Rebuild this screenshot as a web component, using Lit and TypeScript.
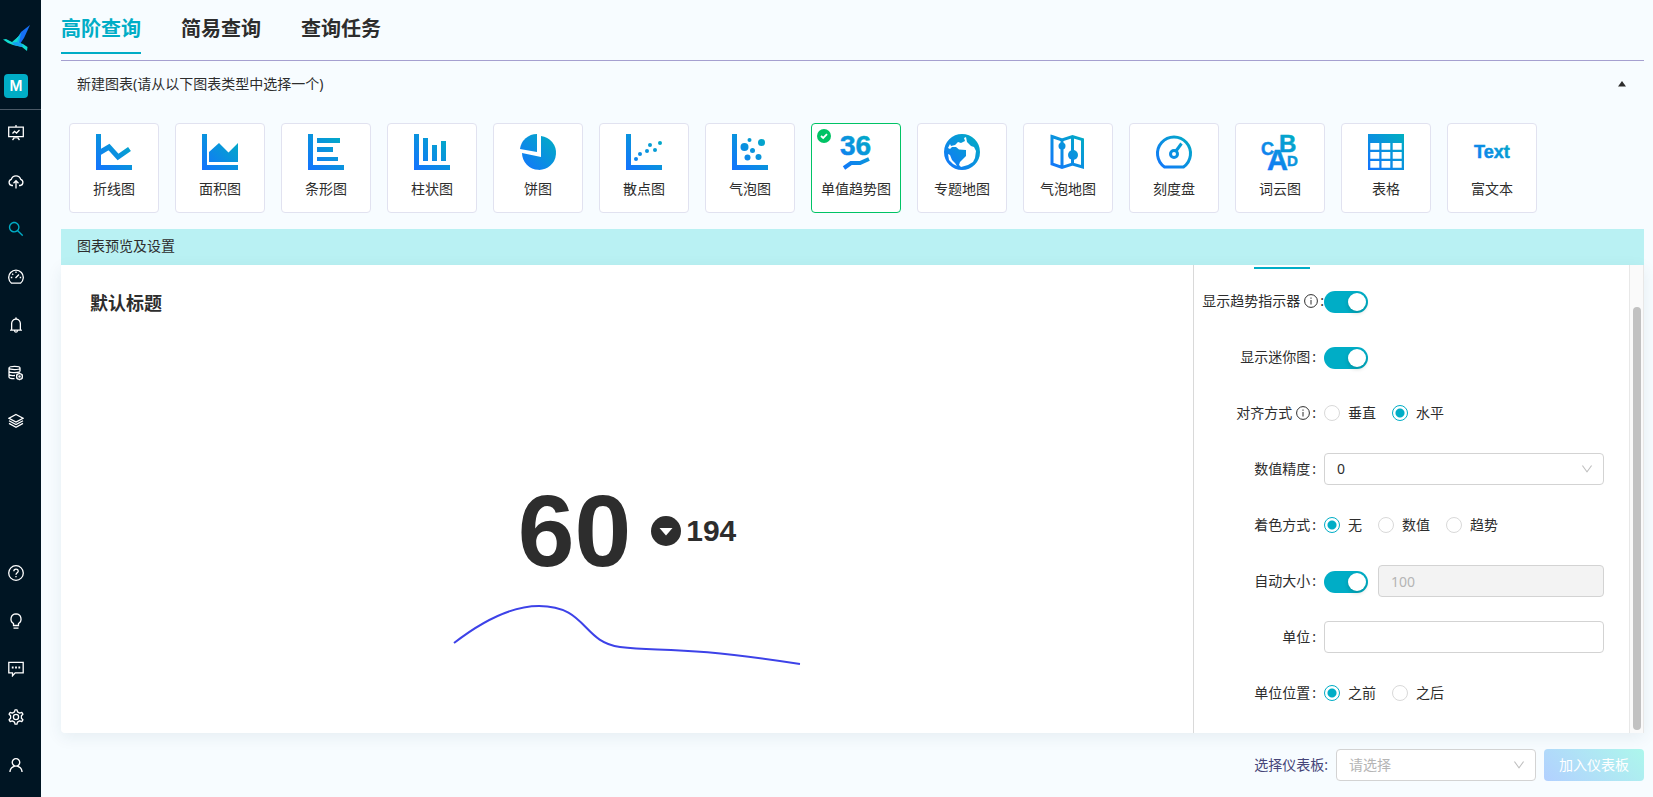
import { LitElement, html, css, svg } from "lit";
import { customElement, state } from "lit/decorators.js";
import { classMap } from "lit/directives/class-map.js";

const axes = svg`<path d="M0 0H5V31H36V36H0Z" />`;

const charts = [
  {
    name: "折线图",
    art: svg`${axes}<path class="line" stroke-width="5" d="M3 19L13 13L22 23L33.500 15" />`,
  },
  { name: "面积图", art: svg`${axes}<path d="M7 28V18L17 9L26.500 18.500L36 9V28Z" />` },
  { name: "条形图", art: svg`${axes}<path d="M9 4H32V9H9ZM9 13H25V18H9ZM9 23H30V27H9Z" />` },
  { name: "柱状图", art: svg`${axes}<path d="M9 4H14V27H9ZM18 11H23V27H18ZM27 7H32V27H27Z" />` },
  {
    name: "饼图",
    art: svg`<path d="M21 2A17 17 0 1 1 2 19L21 23Z" /><path d="M17 0V18L0 15A17 17 0 0 1 17 0Z" />`,
  },
  {
    name: "散点图",
    art: svg`${axes}<circle cx="10" cy="25" r="2" /><circle cx="14" cy="20" r="2" /><circle cx="21" cy="17" r="2" />
      <circle cx="24" cy="11" r="2" /><circle cx="29" cy="16" r="2" /><circle cx="34" cy="9" r="2" />`,
  },
  {
    name: "气泡图",
    art: svg`${axes}<circle cx="12.500" cy="13" r="4" /><circle cx="17.500" cy="6" r="2" /><circle cx="29.500" cy="8.500" r="3.500" />
      <circle cx="20.500" cy="16.500" r="2.500" /><circle cx="15.500" cy="23.500" r="3" /><circle cx="26.500" cy="23" r="3" />`,
  },
  {
    name: "单值趋势图",
    art: svg`<text x="2" y="21" font-size="28">36</text>
      <path class="line" stroke-width="4" d="M6 34L13 29H22L31 25" />`,
  },
  {
    name: "专题地图",
    art: svg`<path fill-rule="evenodd" d="M18 0A18 18 0 1 1 18 36A18 18 0 1 1 18 0ZM6 10L7 12L11 11L14 8L17 9L21 7L20 4L22 3L23 8L27 12L30 13L32 17L31 24L29 28L24 31L17 33L15 31L16 28L20 24L22 22V16L15 15.500L12 13L8 13L6 15L4 14ZM4 20L6 21L8 26L11 29L13 32L9 30L5 26Z" />`,
  },
  {
    name: "气泡地图",
    art: svg`<path class="line" stroke-width="3" d="M2 2.500L12 6L22.500 2.500L32.500 5.500V33L22.500 30L12 33.500L2 30ZM12 6V33M22.500 3V30" />
      <circle cx="12" cy="12" r="3.500" /><circle cx="23" cy="21" r="5" />`,
  },
  {
    name: "刻度盘",
    art: svg`<path class="line" stroke-width="3" stroke-linejoin="round" d="M8.500 33A16.500 16.500 0 1 1 27.500 33Z" />
      <circle class="line" cx="18" cy="20" r="3.500" stroke-width="3" />
      <path class="line" stroke-width="3" d="M20 17L25.500 9.500" />`,
  },
  {
    name: "词云图",
    art: svg`<text x="-1" y="21" font-size="18">C</text><text x="17" y="18" font-size="24">B</text>
      <text x="5" y="36" font-size="29">A</text><text x="25" y="32" font-size="15">D</text>`,
  },
  {
    name: "表格",
    art: svg`<path fill-rule="evenodd" d="M0 0H36V36H0ZM2.300 9V15.700H11.300V9ZM13.500 9V15.700H22.300V9ZM24.700 9V15.700H33.700V9ZM2.300 18V24.700H11.300V18ZM13.500 18V24.700H22.300V18ZM24.700 18V24.700H33.700V18ZM2.300 27V33.700H11.300V27ZM13.500 27V33.700H22.300V27ZM24.700 27V33.700H33.700V27Z" />`,
  },
  { name: "富文本", art: svg`<text x="0" y="24" font-size="18">Text</text>` },
];

/* Sidebar glyphs, 16-unit outlines unless scaled from the 64..960 grid. */
const big = (d: string) =>
  svg`<path class="solid" transform="scale(0.017857) translate(-64 -64)" d="${d}" />`;

const topNav = [
  {
    name: "仪表板",
    art: svg`<path d="M8 0V2M.7 2.200H15.300V11.700H.7ZM8 12V13.500M4.500 15L6.500 12.500M11.500 15L9.500 12.500M4.500 8.500L6.500 6.300L8.500 8L11.500 5" />`,
  },
  {
    name: "数据上传",
    art: svg`<path d="M5 12.500H3.800A3.200 3.200 0 0 1 3.300 6.300A4.900 4.900 0 0 1 12.700 6.300A3.200 3.200 0 0 1 12.200 12.500H11M8 15.500V8M5.500 10.300L8 7.700L10.500 10.300" />`,
  },
  {
    name: "查询",
    art: big(
      "M909.6 854.5L649.9 594.8C690.2 542.7 712 479 712 412c0-80.2-31.300-155.4-87.900-212.100-56.600-56.700-132-87.900-212.100-87.900s-155.500 31.300-212.100 87.900C143.2 256.5 112 331.8 112 412c0 80.100 31.300 155.500 87.900 212.100C256.5 680.8 331.8 712 412 712c67 0 130.600-21.800 182.700-62l259.700 259.600a8.200 8.200 0 0011.600 0l43.600-43.500a8.200 8.200 0 000-11.600zM570.4 570.4C528 612.7 471.8 636 412 636s-116-23.300-158.400-65.600C211.3 528 188 471.8 188 412s23.300-116.100 65.600-158.400C296 211.3 352.2 188 412 188s116.100 23.200 158.400 65.600S636 352.2 636 412s-23.300 116.100-65.600 158.400z"
    ),
  },
  {
    name: "监控",
    art: svg`<path d="M3.500 14.200A7.300 7.300 0 1 1 12.500 14.200ZM7.500 9L11 5.500M8 2.500V4M2.800 8.500H4.300M11.700 8.500H13.200M4.200 4.800L5.200 5.800" />`,
  },
  {
    name: "告警",
    art: big(
      "M816 768h-24V428c0-141.100-104.300-257.700-240-277.100V112c0-22.100-17.900-40-40-40s-40 17.900-40 40v38.900c-135.700 19.400-240 136-240 277.100v340h-24c-17.700 0-32 14.300-32 32v32c0 4.400 3.600 8 8 8h216c0 61.800 50.200 112 112 112s112-50.200 112-112h216c4.400 0 8-3.600 8-8v-32c0-17.700-14.300-32-32-32zM512 888c-26.500 0-48-21.500-48-48h96c0 26.500-21.500 48-48 48zM304 768V428c0-55.600 21.600-107.800 60.900-147.100S456.4 220 512 220c55.600 0 107.800 21.600 147.100 60.900S720 372.4 720 428v340H304z"
    ),
  },
  {
    name: "数据源",
    art: svg`<path d="M1 3C1 .8 12 .8 12 3S1 5.200 1 3ZM1 3V12C1 13.200 4 13.700 6.500 13.700M12 3V6.500M1 6C1 8 8 8 12 6.800M1 9C1 10.500 4.500 10.700 7 10.500" />
      <circle cx="11.500" cy="11.500" r="2.900" /><circle cx="11.500" cy="11.500" r=".6" />
      <path d="M11.500 7.800V8.600M11.500 14.400V15.200M8.300 9.700L9 10.100M14 12.900L14.700 13.300M14.700 9.700L14 10.100M9 12.900L8.300 13.300" />`,
  },
  {
    name: "图层",
    art: svg`<path d="M8 1.500L15 5.200L8 9L1 5.200ZM1 7.800L8 11.600L15 7.800M1 10.400L8 14.200L15 10.400" />`,
  },
];

const bottomNav = [
  {
    name: "帮助",
    art: svg`<circle cx="8" cy="8" r="7.300" /><path d="M5.800 6.300C5.800 3.300 10.200 3.300 10.200 6.200C10.200 7.800 8 7.900 8 9.800M8 11V12.300" />`,
  },
  {
    name: "提示",
    art: svg`<path d="M5.500 12.500V10.500C1.500 8 2.300 1 8 .8C13.700 1 14.500 8 10.500 10.500V12.500ZM5.500 15.200H10.500" />`,
  },
  {
    name: "反馈",
    art: svg`<path d="M.8 1.300H15.200V11.800H7.200L4.500 14.800V11.800H.8Z" /><path stroke-width="1.800" d="M3.800 6.500H5.600M7.100 6.500H8.900M10.400 6.500H12.200" />`,
  },
  {
    name: "设置",
    art: svg`<path stroke-linejoin="round" d="M6.500 2.900L7 .8H9L9.500 2.900L11.700 4.100L13.800 3.400L14.900 5.200L13.400 6.800V9.200L14.900 10.800L13.800 12.600L11.700 11.900L9.500 13.100L9 15.200H7L6.500 13.100L4.300 11.900L2.200 12.600L1.100 10.800L2.600 9.200V6.800L1.100 5.200L2.200 3.400L4.300 4.100Z" /><circle cx="8" cy="8" r="2.600" />`,
  },
  {
    name: "用户",
    art: big(
      "M858.5 763.6a374 374 0 00-80.600-119.500 375.630 375.630 0 00-119.500-80.600c-.4-.2-.8-.3-1.200-.5C719.5 518 760 444.7 760 362c0-137-111-248-248-248S264 225 264 362c0 82.700 40.500 156 102.800 201.100-.4.2-.8.3-1.200.5-44.800 18.900-85 46-119.500 80.600a375.630 375.630 0 00-80.600 119.500A371.700 371.700 0 00136 901.8a8 8 0 008 8.200h60c4.400 0 7.900-3.500 8-7.800 2-77.200 33-149.500 87.800-204.300 56.700-56.700 132-87.900 212.200-87.900s155.500 31.200 212.200 87.900C779 752.7 810 825 812 902.2c.1 4.400 3.600 7.800 8 7.800h60a8 8 0 008-8.200c-1-47.800-10.900-94.300-29.500-138.200zM512 534c-45.900 0-89.100-17.900-121.600-50.400S340 407.9 340 362c0-45.900 17.900-89.100 50.400-121.600S466.1 190 512 190s89.100 17.900 121.600 50.400S684 316.1 684 362c0 45.900-17.900 89.100-50.400 121.600S557.9 534 512 534z"
    ),
  },
];

const info = html`<svg class="info" viewBox="0 0 14 14" aria-hidden="true">
  <circle cx="7" cy="7" r="6.400" /><path d="M7 6V10.500M7 3.500V4.800" />
</svg>`;

const chevron = html`<svg class="chevron" viewBox="64 64 896 896" aria-hidden="true">
  <path d="M884 256h-75c-5.100 0-9.900 2.500-12.900 6.600L512 654.200 227.900 262.600c-3-4.100-7.800-6.600-12.900-6.600h-75c-6.500 0-10.300 7.400-6.500 12.700l352.600 486.100c12.800 17.600 39 17.600 51.700 0l352.600-486.100c3.900-5.300.1-12.700-6.400-12.700z" />
</svg>`;

@customElement("app-root")
export class AppRoot extends LitElement {
  @state() private tab = 0;
  @state() private chart = 7;

  static styles = css`
    :host {
      display: flex;
      min-height: 100vh;
      background: #f7fcff;
      color: #2d2d2d;
      font: 14px/22px "Noto Sans", "Noto Sans CJK SC", sans-serif;
    }
    * { box-sizing: border-box; }
    button, input, select { font: inherit; color: inherit; margin: 0; }
    button { cursor: pointer; }
    .defs { position: absolute; width: 0; height: 0; }

    .side {
      flex: none;
      width: 41px;
      background: #001523;
      display: flex;
      flex-direction: column;
      padding-bottom: 8px;
    }
    .brand {
      height: 109px;
      box-shadow: 0 1px #4b5966;
      display: flex;
      flex-direction: column;
      gap: 22px;
      padding: 24px 0 0 3px;
    }
    .logo { width: 28px; height: 28px; }
    .badge {
      width: 24px;
      height: 24px;
      margin-left: 1px;
      border-radius: 4px;
      background: #00adc6;
      color: #fff;
      font-family: Inter, sans-serif;
      font-size: 14px;
      line-height: 24px;
      font-weight: 600;
      text-align: center;
    }
    .nav { display: flex; flex-direction: column; }
    .nav.low { margin-top: auto; }
    .nav a {
      height: 48px;
      padding-left: 8px;
      display: flex;
      align-items: center;
      color: #fff;
    }
    .nav a.on { color: #00adc6; }
    .nav svg { width: 16px; height: 16px; fill: none; stroke: currentColor; stroke-width: 1.3; }
    .nav .solid { fill: currentColor; stroke: none; }

    .main {
      flex: 1;
      min-width: 0;
      display: flex;
      flex-direction: column;
      padding: 0 9px 0 20px;
    }
    .tabs {
      display: flex;
      gap: 40px;
      height: 61px;
      border-bottom: 1px solid #a5a0d0;
    }
    .tabs button {
      height: 54px;
      padding: 6px 0 0;
      border: 0;
      border-bottom: 2px solid transparent;
      background: none;
      font-size: 20px;
      font-weight: 700;
      line-height: 30px;
    }
    .tabs button.on { color: #00adc6; border-color: #00adc6; }

    .picker {
      display: flex;
      align-items: center;
      justify-content: space-between;
      width: 100%;
      height: 46px;
      padding: 0 18px 0 16px;
      border: 0;
      background: none;
      text-align: left;
    }
    .caret { width: 8px; height: 6px; fill: #2d2d2d; }
    .cards {
      display: flex;
      flex-wrap: wrap;
      gap: 16px;
      padding: 16px 8px;
    }
    .card {
      position: relative;
      width: 90px;
      height: 90px;
      padding: 10px 0 0;
      border: 1px solid #e1e2f0;
      border-radius: 4px;
      background: #fff;
      display: flex;
      flex-direction: column;
      align-items: center;
      gap: 8px;
    }
    .card.on { border-color: #00c365; }
    .art { width: 36px; height: 36px; overflow: visible; fill: url(#tint); flex: none; }
    .art .line { fill: none; stroke: url(#tint); }
    .art text {
      font-family: "Liberation Sans", Arial, sans-serif;
      font-weight: 700;
      stroke: url(#tint);
      stroke-width: 0.5;
    }
    .tick { position: absolute; left: 5px; top: 5px; width: 14px; height: 14px; }

    .band {
      margin: 0;
      height: 36px;
      padding: 0 16px;
      background: #b9f1f3;
      font-size: 14px;
      font-weight: 400;
      line-height: 34px;
    }
    .panel {
      flex: 1;
      display: flex;
      background: #fff;
      border-radius: 0 0 4px 4px;
      box-shadow: 0 4px 16px rgba(30, 60, 90, 0.08);
    }
    .preview {
      flex: 1;
      min-width: 0;
      display: flex;
      flex-direction: column;
      padding: 24px 29px;
    }
    .preview h2 { margin: 0; font-size: 18px; font-weight: 700; line-height: 28px; }
    .plot {
      flex: 1;
      display: flex;
      flex-direction: column;
      align-items: center;
      justify-content: flex-end;
      gap: 24px;
      padding-bottom: 42px;
      font-family: "Liberation Sans", Arial, sans-serif;
      font-weight: 700;
    }
    .figures { display: flex; align-items: center; gap: 20px; }
    .value { font-size: 102px; line-height: 100px; }
    .change { display: flex; align-items: center; gap: 5px; font-size: 30px; line-height: 34px; }
    .change svg { width: 30px; height: 30px; }
    .spark { width: 348px; max-width: 100%; height: 62px; fill: none; stroke: #3d42e8; stroke-width: 2; }

    .settings {
      flex: none;
      width: 436px;
      border-left: 1px solid #d9d9d9;
      padding: 2px 24px 24px 8px;
    }
    .ink { width: 56px; height: 2px; margin-left: 52px; background: #00adc6; }
    .rows { display: flex; flex-direction: column; gap: 24px; padding-top: 16px; }
    .row { display: flex; min-height: 32px; align-items: center; margin: 0; padding: 0; border: 0; }
    .name {
      flex: none;
      width: 122px;
      padding-right: 8px;
      display: flex;
      align-items: center;
      justify-content: flex-end;
      line-height: 32px;
      white-space: nowrap;
    }
    .name.full { padding-right: 0; }
    .name::after { content: ":"; margin-left: 2px; }
    .info { width: 14px; height: 14px; margin-left: 4px; fill: none; stroke: currentColor; }
    .field { width: 280px; display: flex; align-items: center; gap: 10px; }
    .field.radios { gap: 16px; }
    .radios label { display: flex; align-items: center; gap: 8px; }
    input[type="radio"] {
      appearance: none;
      width: 16px;
      height: 16px;
      border: 1px solid #d9d9d9;
      border-radius: 50%;
      background: #fff;
    }
    input[type="radio"]:checked {
      border-color: #00adc6;
      background: radial-gradient(circle, #00adc6 4px, #fff 5px);
    }
    .switch {
      appearance: none;
      flex: none;
      width: 44px;
      height: 22px;
      margin-top: 2px;
      padding: 2px;
      border-radius: 11px;
      background: #bfbfbf;
      display: flex;
    }
    .switch::before {
      content: "";
      width: 18px;
      height: 18px;
      border-radius: 50%;
      background: #fff;
      box-shadow: 0 2px 4px rgba(0, 35, 11, 0.2);
    }
    .switch:checked { background: #00adc6; justify-content: flex-end; }
    .box {
      flex: 1;
      width: 100%;
      min-width: 0;
      height: 32px;
      padding: 0 12px;
      border: 1px solid #d3d3d3;
      border-radius: 4px;
      background: #fff;
      appearance: none;
      outline: none;
    }
    .box:disabled { background: #f3f3f3; color: #b5b5b5; opacity: 1; }
    .pick { position: relative; display: flex; flex: 1; }
    .chevron {
      position: absolute;
      right: 11px;
      top: 10px;
      width: 12px;
      height: 12px;
      fill: #bfbfbf;
      pointer-events: none;
    }
    .track {
      flex: none;
      width: 15px;
      border: 1px solid #e8e8e8;
      border-width: 0 1px;
      background: #fafafa;
      padding: 42px 2px 3px 3px;
      display: flex;
    }
    .thumb { flex: 1; border-radius: 4px; background: #c1c1c1; }

    .foot {
      display: flex;
      align-items: center;
      justify-content: flex-end;
      gap: 8px;
      padding: 16px 0;
    }
    .foot label { color: #464578; }
    .foot .pick { flex: none; width: 200px; }
    .foot select { color: #b5b5b5; }
    .add {
      height: 32px;
      width: 100px;
      padding: 0;
      border: 0;
      border-radius: 4px;
      color: #fff;
      background: linear-gradient(45deg, #b2d0ff, #adf7ec);
    }
  `;

  private nav(items: typeof topNav, low = false) {
    return html`<nav class=${classMap({ nav: true, low })}>
      ${items.map(
        (n) => html`<a href="#" aria-label=${n.name} class=${classMap({ on: n.name === "查询" })}>
          <svg viewBox="0 0 16 16">${n.art}</svg>
        </a>`
      )}
    </nav>`;
  }

  private radios(title: unknown, group: string, options: string[], picked: number) {
    return html`<div class="row" role="radiogroup" aria-labelledby=${group}>
      <span class="name" id=${group}>${title}</span>
      <div class="field radios">
        ${options.map(
          (o, i) => html`<label><input type="radio" name=${group} ?checked=${i === picked} />${o}</label>`
        )}
      </div>
    </div>`;
  }

  render() {
    return html`
      <svg class="defs" aria-hidden="true">
        <linearGradient id="tint" gradientUnits="userSpaceOnUse" x1="0" y1="36" x2="36" y2="0">
          <stop offset="0" stop-color="#1472ff" />
          <stop offset="1" stop-color="#00b0c0" />
        </linearGradient>
      </svg>
      <aside class="side">
        <div class="brand">
          <svg class="logo" viewBox="0 0 28 28" aria-hidden="true">
            <path d="M27 1L18 8L14 15L13 19L17 20L21 14Z" fill="#1670f5" />
            <path d="M18 9L14 14L12 18L16 19Z" fill="#0fb5e5" />
            <path d="M0 15.500L3 15L9 18L16 12L14 18L20 20L24.500 23L24 27L19 23L10 21L5 19Z" fill="#10dcd0" />
            <path d="M9 18.500L14 18L20 21L19 23L11 21Z" fill="#169ff0" />
          </svg>
          <div class="badge">M</div>
        </div>
        ${this.nav(topNav)} ${this.nav(bottomNav, true)}
      </aside>

      <main class="main">
        <div class="tabs" role="tablist">
          ${["高阶查询", "简易查询", "查询任务"].map(
            (t, i) => html`<button
              role="tab"
              aria-selected=${i === this.tab}
              class=${classMap({ on: i === this.tab })}
              @click=${() => (this.tab = i)}
            >${t}</button>`
          )}
        </div>
        <button class="picker" aria-expanded="true">
          新建图表(请从以下图表类型中选择一个)
          <svg class="caret" viewBox="0 0 8 6"><path d="M4 0L8 5.500H0Z" /></svg>
        </button>
        <div class="cards">
          ${charts.map(
            (c, i) => html`<button
              class=${classMap({ card: true, on: i === this.chart })}
              aria-pressed=${i === this.chart}
              @click=${() => (this.chart = i)}
            >
              ${i === this.chart
                ? html`<svg class="tick" viewBox="0 0 14 14">
                    <circle cx="7" cy="7" r="7" fill="#00c365" />
                    <path d="M4 7L6.200 9L10 5.200" fill="none" stroke="#fff" stroke-width="1.800" />
                  </svg>`
                : ""}
              <svg class="art" viewBox="0 0 36 36">${c.art}</svg>
              <span>${c.name}</span>
            </button>`
          )}
        </div>
        <h1 class="band">图表预览及设置</h1>
        <section class="panel">
          <div class="preview">
            <h2>默认标题</h2>
            <div class="plot">
              <div class="figures">
                <span class="value">60</span>
                <span class="change">
                  <svg viewBox="0 0 30 30" aria-hidden="true">
                    <circle cx="15" cy="15" r="15" fill="#2d2d2d" />
                    <path d="M8.500 12H21.500L15 19.500Z" fill="#fff" />
                  </svg>
                  194
                </span>
              </div>
              <svg class="spark" viewBox="0 0 348 62" aria-hidden="true">
                <path d="M1 38C36 11 64 1 86 1C134 1 129 37 167 42C208 47 224 40 347 59" />
              </svg>
            </div>
          </div>
          <form class="settings">
            <div class="ink"></div>
            <div class="rows">
              <div class="row">
                <label class="name full" for="trend">显示趋势指示器${info}</label>
                <div class="field"><input class="switch" id="trend" type="checkbox" role="switch" checked /></div>
              </div>
              <div class="row">
                <label class="name" for="mini">显示迷你图</label>
                <div class="field"><input class="switch" id="mini" type="checkbox" role="switch" checked /></div>
              </div>
              ${this.radios(html`对齐方式${info}`, "align", ["垂直", "水平"], 1)}
              <div class="row">
                <label class="name" for="precision">数值精度</label>
                <div class="field">
                  <div class="pick">
                    <select class="box" id="precision"><option>0</option><option>1</option><option>2</option></select>
                    ${chevron}
                  </div>
                </div>
              </div>
              ${this.radios("着色方式", "colour", ["无", "数值", "趋势"], 0)}
              <div class="row">
                <label class="name" for="auto">自动大小</label>
                <div class="field">
                  <input class="switch" id="auto" type="checkbox" role="switch" checked />
                  <input class="box" type="text" value="100" aria-label="大小" disabled />
                </div>
              </div>
              <div class="row">
                <label class="name" for="unit">单位</label>
                <div class="field"><input class="box" id="unit" type="text" /></div>
              </div>
              ${this.radios("单位位置", "place", ["之前", "之后"], 0)}
            </div>
          </form>
          <div class="track"><div class="thumb"></div></div>
        </section>
        <footer class="foot">
          <label for="board">选择仪表板:</label>
          <div class="pick">
            <select class="box" id="board"><option>请选择</option></select>
            ${chevron}
          </div>
          <button class="add">加入仪表板</button>
        </footer>
      </main>
    `;
  }
}
